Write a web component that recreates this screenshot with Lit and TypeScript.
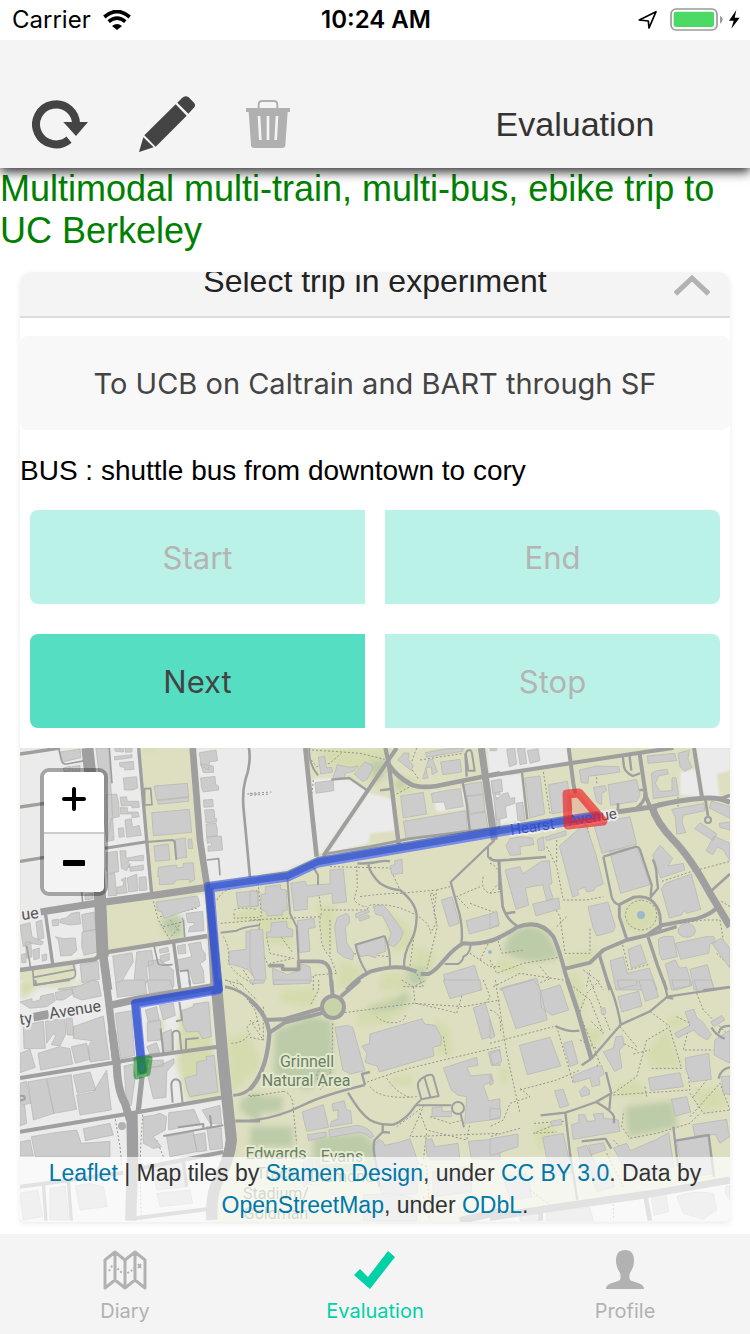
import { LitElement, html, svg, css } from "lit";
import { customElement } from "lit/decorators.js";

interface Sheet {
  x: number;
  y: number;
  plain?: string;
  green?: string;
  dark?: string;
  buildings: string;
  roads: [number, string][];
  paths: string;
}

// Each sheet is drawn at three units to one map pixel, from its own corner.
const SHEETS: Sheet[] = [
  {
    x: 10,
    y: 740,
    plain:
      "M30 24H388L425 462L270 490L30 520ZM556 24H750V410L590 440ZM30 525L270 495L290 640L128 672L110 560L30 560ZM30 520H110L128 672L30 690ZM285 645L590 595L615 750H290ZM200 665L280 655L290 750H190ZM490 500L580 460L600 590L530 595Z",
    green: "M395 24H450V30L420 38L395 30ZM670 520L740 500L745 540L680 545Z",
    dark: "M450 550L470 530L520 525L515 590L480 590Z",
    buildings:
      "M150 36L210 27L213 53L158 66ZM160 84L182 79V95H162ZM185 80L210 76V94H186ZM258 24H296L312 300L290 305ZM313 26H340V36L316 34ZM345 24H366V36L346 37ZM313 50L366 44V53L314 60ZM328 68L370 64L372 88L344 90V82L330 80ZM340 114L380 110L383 144L368 150L343 150ZM290 165L320 162L326 190L328 230L304 235L293 300ZM330 172L350 170L352 184H386L388 202L366 204V196L334 198ZM330 203H352V216H384L388 230L366 234V222H332ZM325 265L340 263L343 290L327 292ZM345 240L364 236L368 262L388 256L394 286L350 292ZM432 138L532 130L536 170L440 180ZM442 182L536 172V184L445 193ZM425 218L538 208L545 277L430 287ZM432 318L475 312L480 360L436 364ZM496 298L526 294L530 352L500 356ZM534 298L545 297L548 325L536 326ZM445 382L500 375V384L520 382V370L550 368L554 420L538 428V418L500 420L490 432L448 434V410H443ZM288 338L322 334L326 395L296 400L288 390ZM330 332H348V355L400 345V362H355V382L400 375V390L360 394V370L350 392L334 385ZM293 402L314 400L320 466L296 468ZM320 442L340 438V424L333 420L348 412V440L352 458L322 462ZM352 414L380 402L384 452L356 456ZM387 412L408 410L411 450L388 452ZM225 464L248 460L250 476L226 480ZM568 38L618 30L623 62L598 66L596 90L573 76ZM572 72L610 78L611 97L580 98ZM572 114L615 109L617 134L626 138V150L580 156L574 140ZM580 180L608 178L610 200L582 202ZM584 210L612 208L615 236H620V246L588 248ZM588 252L618 250L622 270V288L590 290ZM590 292L634 288L638 330L594 334V318H604V308L592 310ZM438 486L560 468L566 476L570 498L462 535L455 516L442 512ZM528 520L578 514L582 572L535 576L540 560L552 556V548H533ZM30 556L60 548L66 590L100 606L95 615L60 610L40 620ZM78 546L95 540L102 594L84 600ZM126 540L146 538V556L128 558ZM150 538L168 534L184 520L208 516L212 552L180 555L150 548ZM215 524L252 516L258 568L220 574ZM216 576L258 568L264 636L222 646L215 620ZM145 600L136 590L160 596L196 594L200 632L184 646L152 648ZM46 608L62 605L66 650L50 655ZM68 630L88 624V655L72 660ZM96 645L110 642V660L97 664ZM34 644L48 640V668H36ZM210 674L264 664L268 718L216 728ZM308 648L366 638L370 666L362 678L320 750ZM380 636L425 630L430 672L410 680L412 720L400 750H370ZM415 664L448 658L490 690L492 740L420 748ZM448 628L474 622L476 635L450 640ZM450 648L478 640V660L454 668ZM502 618L526 613L528 640L505 642ZM535 612L572 606L576 628L586 640V660L570 672L580 690L583 728L550 732L540 696L505 690L500 660L545 650ZM145 746L205 738V750H145ZM678 458L745 452V498L684 502ZM750 570L708 574V628L658 634V672L690 680L716 690L732 712L750 710Z",
    roads: [
      [36, "M232 24L252 200L270 470L278 650"],
      [26, "M274 480L280 650L294 750"],
      [20, "M548 24L570 300L592 445"],
      [26, "M598 445L615 750"],
      [10, "M386 24L410 300L425 462"],
      [22, "M92 516L270 488L430 466L592 442"],
      [10, "M30 42L150 24"],
      [5, "M298 24L306 130"],
      [5, "M146 24L154 60Q157 73 170 72L225 62"],
      [10, "M30 201L104 190"],
      [10, "M30 364L104 352"],
      [9, "M285 325L410 305"],
      [6, "M410 306L485 300Q494 300 494 308L499 360"],
      [5, "M404 146L422 145L426 194L404 195Z"],
      [13, "M30 690L255 658Q275 640 300 635L592 588"],
      [10, "M106 518L128 672"],
      [10, "M490 602L510 750"],
      [5, "M50 618L62 684M432 618L444 670Q446 678 488 674M510 694L534 690L542 750M520 538L524 592"],
      [8, "M717 24Q724 70 706 120Q695 160 702 220L720 412"],
      [5, "M590 360L626 356L630 406M215 456L218 488"],
      [5, "M68 686L72 736L184 716Q200 712 196 696L190 672M70 712L196 688"],
      [6, "M632 578L680 572Q700 560 750 556"],
    ],
    paths:
      "M712 162H750M430 484L445 540L478 596L500 570L520 530M450 530L560 505M460 560L520 545M480 540L510 575M620 480Q640 450 660 448M632 550L750 540M672 510Q690 500 740 508M672 520V535L745 532M640 590Q660 620 655 670Q690 720 740 730M700 690L730 735M645 720L700 735M740 450V500",
  },
  {
    x: 250,
    y: 740,
    plain:
      "M0 24H162L198 350L110 390L0 408ZM182 130L195 115L300 118L350 150L218 338L202 340ZM355 158L400 170L430 180L434 272L360 280L355 310L232 342ZM545 155L640 150L645 205L560 215ZM712 24H750V95L718 100ZM708 110L750 100V260L730 262Z",
    green:
      "M190 28L400 34L410 80L380 140L320 90L250 80ZM430 120L480 110L520 130L450 170ZM10 500L120 510L130 620L50 610ZM200 490L260 500L240 640L220 620ZM400 500L480 560L490 620L430 640ZM270 660L350 690L300 740L260 750ZM500 620L560 640L540 700L480 690ZM400 700L480 700L470 750H380Z",
    dark: "M355 70L410 55L405 100L380 130ZM440 120L465 110L460 140L440 150ZM470 690L530 680L520 730L480 740Z",
    buildings:
      "M205 52L224 49L230 84L245 82L248 96L212 102ZM262 74L298 82L325 78L310 94L285 100L284 112L248 117ZM345 66L366 76L368 86L350 120L338 124L312 102ZM195 128L250 121L251 152L198 160ZM462 38L478 40L474 58L490 76L484 92L444 60ZM526 38L578 28L640 24L638 34L530 52ZM535 60L548 58L562 96L546 104L544 80L528 84L534 114L518 116ZM572 66L630 58L635 96L578 104ZM452 168L520 157L530 222L460 234ZM544 160L562 156L600 150L632 146L640 200L588 208L582 186L548 188ZM642 134L694 126L700 162L648 168ZM650 170L700 164L705 214L658 220ZM656 224L706 216L714 266L662 272ZM460 244L648 212L652 270L485 298L468 294ZM724 125L750 120V165L728 160ZM734 175L750 172V260L738 255ZM0 452L22 455L25 497L0 500ZM46 440L92 434V448L110 450L112 510L98 514V525L52 528L50 515L33 508V462H46ZM122 430L166 424L170 436L240 432V390L280 387L290 486L248 490L246 460L172 472V508L132 512ZM64 548L110 544L112 564L128 568V590L66 592L50 588V576H62ZM0 570L38 568L48 715L38 728L16 724L0 680ZM142 542L192 535L196 562L175 566L180 634L148 638ZM67 684L112 704L152 690L155 672L180 680L185 724L70 734ZM262 532L290 520L298 530V550L286 562L290 608L312 640L308 660L282 652L262 636L254 560ZM316 522L354 508L358 516L318 534ZM326 535L354 524L360 532L330 544ZM370 498L400 496L412 508L460 576L450 602L432 620L412 612L424 580L398 528L376 522ZM318 616L404 588L408 634L382 642L376 654L354 646L330 650ZM420 378L434 374V362L456 358L458 400L426 404ZM574 480L606 470L628 550L598 560ZM648 542L740 516L746 558L658 582ZM580 704L674 676L695 750H592Z",
    roads: [
      [14, "M166 24L185 210L200 350"],
      [6, "M178 24Q174 70 204 106"],
      [12, "M440 24L410 68L220 348"],
      [7, "M244 119L298 114L350 150M390 151L422 147"],
      [13, "M406 24L416 68L426 150L446 312"],
      [14, "M416 74Q440 110 484 134Q510 145 560 138L750 100"],
      [21, "M694 24L728 265L733 300"],
      [7, "M638 128L650 190L660 278M646 40L650 110"],
      [6, "M658 30Q645 32 649 50L655 92L674 92L666 40Q664 28 655 30"],
      [8, "M222 342L360 320L480 296L750 262"],
      [6, "M112 412L120 520L140 560L146 664M190 382L204 405V434"],
      [11, "M56 677H98V688H146V664H205Q232 664 240 690L246 750"],
      [7, "M322 370Q350 372 380 366Q410 360 420 364M355 374Q360 400 390 430Q420 450 450 450Q500 490 500 530Q498 580 484 600Q460 640 462 686"],
      [6, "M316 614L404 588M316 612Q325 660 350 698M404 588Q422 630 420 684"],
      [12, "M290 750Q320 715 360 695Q430 675 470 685L500 695M512 702H535C570 690 590 635 640 610Q700 615 750 592"],
      [7, "M734 300L602 426L628 520Q640 570 634 612"],
      [6, "M714 318L714 350Q720 362 750 362M584 672H625Q640 660 640 650Q660 642 662 615"],
      [7, "M748 362V450"],
    ],
    paths:
      "M0 160L64 156M0 166L60 162M186 30L250 34L330 40L404 58M184 60L200 80L240 70L280 34M190 120L186 160M440 162L480 140M500 24L480 80L504 115M510 60L640 40M0 540L210 530M24 430L34 520L22 600L56 680M50 590L60 640L130 655L60 670M94 592L130 640M208 470L214 510H350L360 495Q420 490 470 512Q540 540 542 580L560 545L540 460H552L550 480M320 378L322 440L312 480Q330 500 350 500M330 470Q400 460 450 460L560 450L552 520L562 560L530 690M240 380L420 384L450 450M214 520Q205 550 214 580Q210 620 240 650L260 700L190 706V750M240 540V650M300 640L420 650M490 600L480 680M460 740L520 740L500 700M560 450L600 440M700 410Q690 450 720 460L750 455M655 505L620 470L690 440M660 490L740 520M660 640L720 680H750M690 660L720 600L750 590",
  },
  {
    x: 490,
    y: 740,
    plain:
      "M0 24H232L238 68L0 102ZM0 112L94 100L108 236L0 262ZM572 95L618 88L634 172L570 165ZM618 24H720V92L680 102L688 170L640 172Z",
    green:
      "M400 490L450 470L500 500L505 550L450 580L400 560ZM230 650L330 620L300 665L235 680ZM30 650L130 690L60 700L10 690ZM235 700L270 700L260 750H240Z",
    dark: "M40 635Q50 565 110 560Q160 555 185 600L208 650Q130 680 70 650Z",
    buildings:
      "M50 28L74 24L80 72L58 80ZM82 26L104 24L110 70L90 74ZM112 32L144 26L150 62L120 70ZM0 24H20V32H0ZM4 122L34 117L38 154L14 158L20 178L38 162L54 158L60 176L74 172V190L46 200L50 232L20 240ZM78 190L98 186L106 240L84 245ZM104 114L150 108L164 222L120 234ZM175 134L232 124L246 210L186 222ZM268 90L320 78L386 80L390 96L336 104L296 108L294 130L274 128ZM310 142L345 137L350 152L336 160L335 194L320 186ZM354 134L440 118L450 164L440 184L362 196ZM472 48L554 40L560 62L474 70ZM564 40L598 30L594 56L606 82L584 94L570 80ZM484 100L500 92L532 88L535 102L506 108L496 130L510 154L546 152V114L558 112L566 165L490 176ZM545 208L642 190L645 212L580 226L576 246L588 278L560 282L556 232ZM664 184L720 200V235L658 204ZM630 248L680 282L670 302L614 266ZM688 250L720 246V270L690 262ZM672 288L720 310V362L700 330L682 320L668 344L648 332ZM45 390L90 380L98 402L154 364L178 362L186 430L176 436L190 476L170 482L158 434L106 444L116 496L78 508ZM128 492L206 474L210 506L138 528ZM208 318L286 250L316 338L318 344L340 432L318 440L310 452L290 456L284 442L262 450L266 464L248 472ZM142 298L160 290L164 330L146 332ZM164 292L228 272V286L170 302ZM60 296L90 290L128 294L132 314L90 320L92 344L60 346L48 318ZM310 250L420 230L440 312L336 340ZM358 332L440 320L480 434L392 460ZM488 345L510 316L548 355L534 378L580 370L584 390L512 414ZM514 446L526 430L604 402L632 508L590 520L584 510L574 525L538 534ZM294 500L330 492L354 486L364 520L376 560L370 574L320 588L308 560ZM564 574Q566 552 592 550Q616 555 616 575Q612 592 588 592Q568 590 564 574ZM505 598Q515 586 550 590L562 650L516 660L508 640ZM556 610L648 590L672 590L676 606L660 612L656 640L572 658ZM666 610L694 594L720 625V685ZM414 628L452 614L470 668L424 684ZM360 662L400 650L412 700L478 684L502 750H378ZM526 672L556 660L568 684L590 682L606 736L560 750H545ZM600 688L652 674L670 740V750H612ZM0 522L20 514L28 552L0 566ZM30 745L140 714L150 750H30Z",
    roads: [
      [12, "M0 107L240 70L480 34L550 24"],
      [12, "M236 24L250 130L256 160"],
      [7, "M96 98L112 238M398 46L402 80Q405 96 428 108L450 100M418 42L424 92"],
      [12, "M448 36L468 170L482 205M612 24L636 172"],
      [15, "M310 230L380 216L480 202Q560 180 650 174Q690 172 720 188"],
      [22, "M484 196Q500 250 550 300Q600 350 660 460L720 560"],
      [10, "M464 160Q470 180 440 205M510 190L490 210M692 176L720 166"],
      [8, "M664 452L720 402M646 178L654 228"],
      [8, "M384 190V212M448 150H466"],
      [7, "M340 350L430 322Q445 316 450 330L485 435L482 468M340 350L365 470Q370 490 388 494M488 358Q500 380 500 410L504 445L480 474"],
      [9, "M388 494L430 472Q480 462 500 500Q515 520 510 572M388 494V530L410 596"],
      [12, "M226 686L300 668L340 630L410 600L470 586L515 556L620 536Q660 524 680 504"],
      [10, "M476 586L560 560M474 590L502 675L530 750M328 644L360 750"],
      [12, "M0 604Q40 590 80 562Q150 535 190 590Q205 620 226 700L242 750"],
      [8, "M0 350Q0 362 24 362L168 351M26 362L38 500Q50 540 84 560M50 520L76 516"],
      [6, "M640 750L720 740"],
    ],
    paths:
      "M160 96L180 220M170 320L200 380L220 480H290L340 470M200 300V370M180 480L210 530L225 640H300V560M290 250L310 340M320 100V136M564 170V204M516 424L600 396L720 364M490 150L510 160M0 460L26 430M0 370Q30 380 26 420M84 560L20 590L36 640L100 630M0 660L20 700L100 670L220 650M10 740L90 700L220 720M150 680L180 716L146 730M200 560L230 530M280 690L320 720L340 750M290 740L300 690M398 615L416 690L480 672M456 480Q500 490 500 526Q495 568 454 570Q410 565 406 526Q410 485 456 480M570 550L640 540H690L700 600M680 640L700 660M694 484L720 500",
  },
  {
    x: 10,
    y: 980,
    plain:
      "M0 0H600L645 340L662 520L600 740H0Z",
    green:
      "M30 0H190V18L80 20L40 60L30 50ZM510 100L600 60L612 200L640 350L530 365L500 250ZM650 170L720 160L750 260L660 340ZM210 0H265L200 20ZM420 130L460 110V160H420Z",
    dark: "M690 365Q720 340 750 345V430L690 390Z",
    buildings:
      "M30 66L66 56V66L90 60L92 48L130 40L136 62L110 80L60 85ZM135 38L184 26L190 40L160 60H140ZM186 24L212 16L250 0L265 5L274 48L215 60L190 50ZM40 136L100 124L106 205L42 206ZM106 124L164 115L168 160L150 198L124 194L138 165L130 162L110 190ZM168 116L186 112L192 165L172 165ZM190 140L280 108L298 238L240 246L235 200L245 182L190 175ZM30 220L60 208L76 262L30 278ZM84 220L148 200L180 206L188 252L92 270ZM184 200L230 190L240 238L196 250ZM30 310L50 304L62 370L30 376ZM54 306L108 296L132 400L70 420ZM110 296L184 284L190 340L200 388L132 400ZM190 286L240 276L258 330L202 340ZM200 345L250 336L290 270L304 390L210 405ZM30 380L44 376L50 430L30 438ZM30 486L60 480L70 528H30ZM64 470L134 458L200 450L214 490L300 484V530H76ZM220 446L300 430L310 465L226 482ZM340 0H405L410 40L322 52L318 10ZM412 0H480L490 30L418 40ZM316 100L364 92L374 226L332 236ZM342 258L368 252L376 290L364 376L350 378ZM406 90L440 80L448 120L414 124ZM412 126L452 122V180L412 184ZM448 76L490 70L496 106L460 120ZM456 160L484 148L490 210L462 214ZM410 200L440 188L450 218L420 222ZM515 92L550 80V72L596 66L604 170L578 176L566 154L530 156L518 132ZM408 266L440 260L492 236V250L470 275L468 352L430 356ZM416 242L460 240V258L420 262ZM524 294L560 284V246L590 240L588 230L612 226L624 336L540 350L532 330ZM400 410L430 406L450 400L470 410L466 450L430 470L454 500L430 505L400 490ZM476 398L552 388L570 430L476 450ZM576 390L630 376L635 432L600 430ZM470 470L550 455L560 515L480 530ZM590 440L634 444L638 505L600 510ZM550 465L585 458L590 512L562 516ZM30 640L84 630L98 710L40 720ZM120 625L166 618L176 720H120ZM196 618L240 610L280 620L292 680L210 690ZM430 560L520 545L532 620L440 630ZM440 640L540 630L548 670L450 680Z",
    roads: [
      [22, "M288 0L304 130L316 240"],
      [24, "M306 150L320 250Q322 330 345 370L360 420"],
      [34, "M366 400L368 530L362 722"],
      [16, "M396 290L384 400"],
      [22, "M300 76L380 58L612 20"],
      [34, "M618 0L640 250L664 480Q660 530 630 590Q600 640 606 720"],
      [12, "M30 294L310 248L420 228L640 198"],
      [12, "M30 455L350 402L640 352"],
      [6, "M452 146L460 220M488 212V170Q484 152 500 152Q510 152 510 170L514 210M488 368L484 318Q484 298 498 298Q512 300 512 318L518 370M528 208V178L566 174M508 66L516 120L498 124M504 0L508 20M538 0L540 15"],
      [6, "M460 468L640 436M504 442L580 432V444M600 405L604 440"],
      [12, "M365 570L640 516M30 620L340 578M364 716L600 686"],
      [10, "M100 610L108 722M175 600L184 722M520 540L530 620"],
      [9, "M645 20Q710 30 750 95M670 346Q720 345 750 285M676 423H750"],
      [6, "M76 0L78 14L180 0M30 348Q46 344 44 358L30 362"],
      [26, "M70 112L116 103"],
    ],
    paths:
      "M316 418L330 500L336 560M398 404L392 500L390 570L394 720M650 0L700 40L735 90L750 150M680 0L740 60M664 190Q700 190 720 160Q700 140 725 130L750 120M715 346H750M440 480L460 530",
  },
  {
    x: 250,
    y: 980,
    plain: "M640 722L720 650L750 655V722Z",
    green:
      "M90 30L200 20L190 80L90 70ZM0 200Q30 210 20 260L0 280ZM320 90L500 60L420 130L320 140ZM550 110L600 150L610 220L560 230ZM420 290L490 285L480 315H430ZM420 40L470 80L350 90Z",
    dark:
      "M75 150L180 110L245 120L250 280L170 330L70 280ZM0 345L100 350L95 395L0 400ZM0 440H130V500H0ZM190 470L340 460L380 500V590H190ZM350 80Q430 80 465 30L480 60Q440 100 360 92Z",
    buildings:
      "M0 0H45L40 10H0ZM70 0H180V10L72 14ZM255 142L292 136L308 142L345 272L300 282L278 270ZM336 198L358 190L360 162L516 116L524 132L556 136L574 170L572 196L548 202L552 228L388 276L382 258L346 248L350 220ZM580 0H690L694 30L600 56ZM670 84L706 70L734 166L696 178ZM715 216L750 208V256H724ZM580 264L680 232L684 256L650 262L662 288L724 282L730 304L700 316L716 362L750 356V416L644 430L650 350L625 346L604 330ZM156 396L220 374L236 442L170 454ZM246 372L282 362L290 390L302 392L306 430L240 440L244 424L264 418V390L250 394ZM172 464L228 456V470L176 482ZM236 450L320 436Q360 440 372 470L360 474Q345 455 320 458L240 472ZM372 500L386 478L400 486L404 496L450 486L480 476L502 540V640L400 650L380 600ZM526 480L546 476L554 500L624 490L630 540H540L530 520ZM546 384L576 380V394L604 394V410H546ZM655 484L750 476V540L664 536ZM548 575L660 560L666 635L550 650ZM340 645L440 640L500 660V722H340ZM160 540L185 536L195 610L160 620Z",
    roads: [
      [13, "M0 60Q50 100 58 160Q52 270 0 328"],
      [12, "M42 120L100 118L218 84M58 158L104 128L220 98"],
      [12, "M244 0L248 50M330 0L272 50"],
      [7, "M0 422Q80 415 160 375Q220 345 345 315M345 315L336 282L360 276M294 338Q330 400 360 420Q390 436 430 434Q470 420 498 374M398 432V456L374 480Q366 500 380 560L388 620M398 456L420 458"],
      [6, "M498 374L514 358L566 348L550 290Q545 278 520 292Q498 305 505 325L514 358M522 288L542 354M498 376H604M632 402L642 442"],
      [22, "M630 722L750 695"],
    ],
    paths:
      "M0 120L40 180L0 172M40 80L40 180M206 0V30L180 78M284 98L490 70L640 80L750 60M455 0L490 20L530 0M490 20L495 70Q590 90 620 100L650 0M380 110Q400 130 440 128Q470 120 465 105M248 130L246 250Q240 300 210 330L200 280Q230 240 240 270M340 310L450 272L580 240L750 200M410 295Q440 340 480 352M360 320Q390 360 500 350M440 440L520 380L480 470L750 460M510 400L530 450L650 480L660 430M530 460L520 540M540 410L600 430L640 420M100 334Q130 340 130 390L140 490M0 350L100 334M520 650L540 722M480 540L530 560L540 700M700 0L720 50L700 80M580 170L590 230",
  },
  {
    x: 490,
    y: 980,
    plain:
      "M0 722V712L270 672L480 642L720 604V722Z",
    green:
      "M275 140L340 150L330 190L290 200ZM465 230L510 155H540L575 260L490 266ZM530 110L580 105L585 140L540 150ZM370 325L430 300L465 320V350H380ZM130 440L200 430L190 470L150 520ZM30 260L60 270L50 310H30ZM600 330L690 320L710 380L640 400ZM245 20L280 0L275 130ZM440 505L478 500L486 520L446 530Z",
    dark: "M404 380L550 362L562 440L415 470Z",
    buildings:
      "M36 26L130 0L150 24L172 120L78 146ZM150 34L210 14L236 90L186 106L154 84ZM0 120L14 170L0 176ZM88 196L180 172L212 258L112 284ZM220 190L246 182L264 250L240 260ZM0 220L28 210L36 244L8 256ZM0 284L10 310L0 316ZM0 384L32 388V410L0 420ZM382 0H440V15L388 26ZM446 0H488L506 50L466 64ZM384 50L446 34L456 78L396 96ZM546 0H600V18L552 26ZM612 0H664L672 26L624 38ZM585 95L612 88L620 112L640 128L664 164L652 180L624 164L612 150L562 174L554 160L600 136ZM662 126L696 106L704 120L672 140ZM674 180L720 150V250L700 240L672 225ZM586 234L656 220L664 298L604 306L588 270ZM475 294L570 278L580 320L482 332ZM694 290L720 288V345L700 340ZM340 216L370 204L378 170L398 168L402 196L388 210L396 264L374 274ZM248 288L310 262L336 256L342 282L326 292L330 314L306 320L300 294L252 308ZM268 334L284 318L298 330V344L274 350ZM332 88L344 82L348 100L336 104ZM194 332L220 328L236 376L210 384ZM182 424L214 418L216 434L184 438ZM244 434L266 428V404L284 404L292 424L316 422L310 402L340 400V414L385 420L390 454L250 478ZM158 472L220 460L246 580L180 590ZM544 358L590 350L602 396L556 408ZM608 434L710 418L718 470L690 490L676 464L614 468ZM560 482L654 468L668 580L580 596ZM370 504L410 490L422 512L500 478L536 458L552 560L460 590L400 556ZM262 504L290 496L320 560L350 552L375 620L320 634L300 570L280 600ZM296 496L340 488L348 510L304 524ZM0 476L60 466L84 462V500L10 525H0ZM40 590L110 580L125 650L60 660ZM484 650L528 640L536 696L492 706ZM560 650Q600 630 670 640L680 690L640 718L580 700ZM170 690L300 682L310 722H170ZM90 706L150 700V722H90ZM706 620L720 615V660L706 640Z",
    roads: [
      [14, "M232 0L262 90L304 236"],
      [7, "M304 236L275 256M304 236L392 134L480 94L530 52M352 0Q380 60 392 134M522 0L532 50L720 22M530 52L550 56"],
      [7, "M196 138Q235 158 268 152"],
      [7, "M152 406L226 398Q280 380 318 366L364 340L348 276M318 366Q370 395 372 412V430M362 342L358 388M226 398L240 520L262 660M275 484L346 476L364 506M550 440L564 560M556 482L656 465L672 590M664 142Q680 168 704 176M720 138Q690 136 686 160M720 262Q690 268 686 296"],
      [22, "M0 712L270 672L480 642L720 600"],
      [14, "M466 648L480 722M152 695V722"],
    ],
    paths:
      "M0 190L190 140M16 0L50 220L90 400M0 90Q40 100 30 160M90 330L200 300L270 270M90 325L120 350L60 370L40 420L0 440M200 140L250 310L330 250L268 100L290 40L330 0M250 20L300 60L340 160L300 120M270 180L330 210M300 0L360 150M390 140L440 200M480 94L540 140L470 180L440 290L370 340M540 150L575 265L480 265M560 110L600 130L580 210L670 210M430 222L480 210M465 320L470 350M370 345L600 330L590 240M600 340L640 400L720 390M600 410L690 310L720 390M610 350L650 300M132 430L220 424L130 460L200 456M90 445L0 470M400 400L395 440L420 475L500 460L600 430L630 400M620 40L640 90L720 170M440 210L400 190M120 630L200 690M370 480L390 500M350 520L400 620M370 660V722",
  },
];

@customElement("trip-map")
class TripMap extends LitElement {
  static styles = css`
    :host {
      display: block;
      position: relative;
      height: 474px;
      overflow: hidden;
      border-radius: 0 0 4px 4px;
      background: #dedfc1;
      font-family: "Liberation Sans", Arial, sans-serif;
    }
    .tiles {
      display: block;
      width: 100%;
      height: 100%;
    }
    .plain { fill: #ebebeb; }
    .green { fill: #d5dbae; }
    .dark { fill: #bccba8; }
    .building { fill: #cccccc; stroke: #b4b4b0; stroke-width: 2; }
    .road { fill: none; stroke: #9f9f9f; stroke-linejoin: round; }
    .path { fill: none; stroke: #949488; stroke-width: 3; stroke-dasharray: 6 6; }
    .place, .street {
      font-family: Roboto, "Open Sans", sans-serif;
      font-size: 16px;
      paint-order: stroke;
      stroke-linejoin: round;
    }
    .place { fill: #6b8062; stroke: #e2e8ce; stroke-width: 4px; }
    .street { fill: #555555; stroke: #ececec; stroke-width: 4px; }
    .small { font-size: 15px; }
    .zoom {
      position: absolute;
      top: 20px;
      left: 20px;
      display: grid;
      width: 60px;
      border: 4px solid rgba(0, 0, 0, 0.3);
      border-radius: 9px;
      background-clip: padding-box;
    }
    .zoom button {
      display: grid;
      place-items: center;
      height: 60px;
      padding: 0 0 6px;
      border: 0;
      background: #ffffff;
      border-radius: 5px 5px 0 0;
    }
    .zoom button + button {
      padding: 0;
      border-top: 2px solid #cccccc;
      border-radius: 0 0 5px 5px;
      background: #f4f4f4;
    }
    .zoom svg { width: 24px; height: 24px; }
    .credit {
      position: absolute;
      inset: auto 0 0 0;
      padding: 0 20px 1px;
      background: rgba(255, 255, 255, 0.7);
      color: #333333;
      font-size: 23px;
      line-height: 32px;
      text-align: center;
    }
    a { color: #0078a8; text-decoration: none; }
  `;

  render() {
    const at = (s: Sheet) => `translate(${s.x} ${s.y}) scale(0.333333)`;
    return html`
      <svg class="tiles" viewBox="20 748 710 474" preserveAspectRatio="xMidYMid slice" role="img" aria-label="Map of the trip">
        <defs>
          <filter id="soft" x="-20%" y="-20%" width="140%" height="140%"><feGaussianBlur stdDeviation="9" /></filter>
          <filter id="edge" x="-5%" y="-5%" width="110%" height="110%"><feGaussianBlur stdDeviation="3" /></filter>
        </defs>
        ${SHEETS.map(
          (s) => svg`<g transform=${at(s)}>
            <path class="plain" filter="url(#edge)" d=${s.plain ?? ""} />
            <path class="green" filter="url(#soft)" d=${s.green ?? ""} />
            <path class="dark" filter="url(#soft)" d=${s.dark ?? ""} />
          </g>`
        )}
        ${SHEETS.map(
          (s) => svg`<g transform=${at(s)}>
            <path class="path" d=${s.paths} />
            <path class="building" d=${s.buildings} />
          </g>`
        )}
        ${SHEETS.map(
          (s) => svg`<g transform=${at(s)}>
            ${s.roads.map(([w, d]) => svg`<path class="road" stroke-width=${w} d=${d} />`)}
          </g>`
        )}
        <circle cx="333" cy="1007" r="11" fill="#c8d3a8" stroke="#9f9f9f" stroke-width="4" />
        <circle cx="458" cy="1108" r="6" fill="#dedfc1" stroke="#9f9f9f" stroke-width="2" />
        <circle cx="708" cy="820" r="3" fill="#dedfc1" stroke="#9f9f9f" stroke-width="2" />
        <circle cx="641" cy="915" r="4" fill="#9fb8cf" />
        <circle cx="490" cy="952" r="2" fill="#9fb8cf" />
        <circle cx="122" cy="1126" r="4" fill="#b2b2b2" />
        <text class="street" transform="translate(22 920) rotate(-7)">ue</text>
        <text class="street" transform="translate(20 1025) rotate(-8)">ty</text>
        <text class="street" transform="translate(50 1019) rotate(-9)">Avenue</text>
        <text class="place" x="307" y="1067" text-anchor="middle">Grinnell</text>
        <text class="place" x="306" y="1086" text-anchor="middle">Natural Area</text>
        <text class="place" x="276" y="1159" text-anchor="middle">Edwards</text>
        <text class="place" x="276" y="1179" text-anchor="middle">Track</text>
        <text class="place" x="276" y="1199" text-anchor="middle">Stadium/</text>
        <text class="place" x="276" y="1219" text-anchor="middle">Goldman</text>
        <text class="place" x="342" y="1162" text-anchor="middle">Evans</text>
        <text class="place" x="342" y="1182" text-anchor="middle">Diamond</text>
        <text class="street small" transform="translate(511 835) rotate(-8)">Hearst</text>
        <text class="street small" transform="translate(569 826) rotate(-9)">Avenue</text>
        <g fill="none" stroke-linecap="round" stroke-linejoin="round">
          <path d="M597 817L500 832L318 863L288 877L210 888L218 990L136 1004L142 1070" stroke="#3355ff" stroke-opacity="0.6" stroke-width="9" />
          <path d="M597 815L500 830L318 861L288 875L208 886L219 989L135 1003L142 1070" stroke="#2a4cc0" stroke-opacity="0.6" stroke-width="8" />
          <path d="M568 825L567 794L579 793L603 821Z" fill="#f02020" fill-opacity="0.15" stroke="#f02020" stroke-opacity="0.66" stroke-width="9" />
          <path d="M137 1060L149 1059L147 1073L137 1076Z" fill="#1c8a2c" fill-opacity="0.55" stroke="#1c8a2c" stroke-opacity="0.6" stroke-width="7" />
        </g>
      </svg>
      <div class="zoom">
        <button type="button" aria-label="Zoom in">
          <svg viewBox="0 0 24 24"><path d="M2 12H22M12 2V22" stroke="#000" stroke-width="4" stroke-linecap="round" /></svg>
        </button>
        <button type="button" aria-label="Zoom out">
          <svg viewBox="0 0 24 24"><rect x="1" y="9" width="22" height="6" rx="1" /></svg>
        </button>
      </div>
      <div class="credit">
        <a href="#leaflet">Leaflet</a> | Map tiles by <a href="#stamen">Stamen Design</a>, under
        <a href="#cc">CC BY 3.0</a>. Data by <a href="#osm">OpenStreetMap</a>, under <a href="#odbl">ODbL</a>.
      </div>
    `;
  }
}

@customElement("app-root")
class AppRoot extends LitElement {
  static styles = css`
    :host {
      display: flex;
      flex-direction: column;
      min-height: 100vh;
      background: #ffffff;
      color: #000000;
      font-family: "Liberation Sans", Arial, sans-serif;
    }
    * { box-sizing: border-box; }
    button { font: inherit; color: inherit; padding: 0; border: 0; background: none; }
    svg { display: block; }
    .status {
      display: grid;
      grid-template-columns: 1fr auto 1fr;
      align-items: center;
      height: 40px;
      padding: 0 10px 0 12px;
      font-family: Inter, sans-serif;
      font-size: 24px;
      line-height: 40px;
    }
    .carrier, .power { display: flex; align-items: center; gap: 12px; }
    .power { justify-content: flex-end; }
    .clock { font-weight: 600; }
    .header {
      position: relative;
      display: grid;
      grid-template-columns: 8fr 7fr;
      align-items: center;
      height: 128px;
      padding-top: 40px;
      background: #f4f4f4;
      box-shadow: 0 4px 10px rgba(0, 0, 0, 0.8);
      clip-path: inset(0 0 -20px 0);
    }
    .tools { display: flex; align-items: center; gap: 51px; padding-left: 32px; }
    .tools button:disabled { opacity: 0.38; }
    h1 {
      margin: 0;
      color: #333333;
      font-size: 34px;
      font-weight: 400;
      line-height: 40px;
      text-align: center;
    }
    .trip { margin: 0; color: #008000; font-size: 36px; line-height: 42px; }
    .card {
      margin: 20px 20px 12px;
      border-radius: 12px 12px 4px 4px;
      box-shadow: 0 2px 6px rgba(0, 0, 0, 0.08);
    }
    .head {
      display: grid;
      grid-template-columns: 76px 1fr 76px;
      align-content: center;
      align-items: center;
      justify-items: center;
      width: 100%;
      height: 46px;
      padding-bottom: 26px;
      overflow: hidden;
      border-bottom: 2px solid #dddddd;
      border-radius: 12px 12px 0 0;
      background: #f4f4f4;
      color: #222222;
      font-size: 32px;
      line-height: 38px;
    }
    .head span { grid-column: 2; }
    .head svg { margin-top: 8px; }
    .button {
      height: 94px;
      border-radius: 8px;
      color: #444444;
      font-family: Inter, sans-serif;
      font-size: 31px;
    }
    .choice { display: block; width: 100%; margin-top: 18px; background: #f8f8f8; font-size: 29px; }
    .leg { margin: 0; padding: 25px 0 23px; font-size: 28px; line-height: 32px; }
    .actions {
      display: grid;
      grid-template-columns: 1fr 1fr;
      gap: 30px 20px;
      padding: 0 10px 20px;
    }
    .action { background: #55dec2; border-radius: 8px 0 0 8px; }
    .action:nth-child(even) { border-radius: 0 8px 8px 0; }
    .action:disabled { background: #bbf2e7; color: #b4b4b4; }
    .tabs {
      display: grid;
      grid-template-columns: repeat(3, 1fr);
      height: 100px;
      margin-top: auto;
      background: #f4f4f4;
      font-family: Inter, sans-serif;
      font-size: 20px;
    }
    .tab {
      display: flex;
      flex-direction: column;
      align-items: center;
      gap: 9px;
      padding-top: 16px;
      color: #b2b2b2;
      line-height: 24px;
      text-decoration: none;
    }
    .on { color: #01d1a7; }
  `;

  render() {
    return html`
      <div class="status">
        <div class="carrier">
          <span>Carrier</span>
          <svg width="28" height="20" viewBox="0 0 84 60" fill="none" stroke="#000" stroke-width="11">
            <path d="M4 21Q42 -12 80 21M17 35Q42 14 67 35" />
            <path d="M27 48Q42 36 57 48L42 60Z" fill="#000" stroke="none" />
          </svg>
        </div>
        <span class="clock">10:24 AM</span>
        <div class="power">
          <svg width="20" height="20" viewBox="0 0 60 60" fill="none" stroke="#000" stroke-width="5" stroke-linejoin="round">
            <path d="M4 30L54 5L33 54L31 33Z" />
          </svg>
          <svg width="70" height="24" viewBox="0 0 210 72">
            <rect x="3" y="3" width="138" height="63" rx="15" fill="none" stroke="#9a9a9a" stroke-width="5" />
            <rect x="11" y="11" width="121" height="46" rx="7" fill="#4cd964" />
            <path d="M150 23Q158 28 158 34Q158 42 150 47Z" fill="#9a9a9a" />
            <path d="M199 6L177 38H191L184 62L209 29H194Z" fill="#000" />
          </svg>
        </div>
      </div>

      <header class="header">
        <div class="tools">
          <button type="button" aria-label="Refresh">
            <svg width="56" height="56" viewBox="96 288 168 168">
              <path d="M228 378A60 60 0 1 0 207 419" fill="none" stroke="#444" stroke-width="24" />
              <path d="M190 366H264L228 408Z" fill="#444" />
            </svg>
          </button>
          <button type="button" aria-label="Edit">
            <svg width="56" height="56" viewBox="417 288 168 168" fill="#444">
              <path d="M527 313L560 347L467 440L433 406ZM532 308L546 294Q556 284 566 292L580 306Q590 316 581 324L565 341ZM430 412L461 442L417 456Z" />
            </svg>
          </button>
          <button type="button" aria-label="Delete" disabled>
            <svg width="44" height="56" viewBox="741 288 132 168" fill="#444">
              <path d="M779 326V314Q779 303 790 303H824Q835 303 835 314V326" fill="none" stroke="#444" stroke-width="6" />
              <path fill-rule="evenodd" d="M741 324H873V336H866L859 436Q858 444 850 444H765Q757 444 756 436L749 336H741ZM776 348L780 420H788L784 348ZM803 348V420H811V348ZM830 348L826 420H834L838 348Z" />
            </svg>
          </button>
        </div>
        <h1>Evaluation</h1>
      </header>

      <main>
        <p class="trip">Multimodal multi-train, multi-bus, ebike trip to UC Berkeley</p>
        <section class="card">
          <button type="button" class="head" aria-expanded="true">
            <span>Select trip in experiment</span>
            <svg width="36" height="22" viewBox="899 324 106 62">
              <path d="M903 381L952 335L1001 381" fill="none" stroke="#b2b2b2" stroke-width="15" />
            </svg>
          </button>
          <button type="button" class="button choice">To UCB on Caltrain and BART through SF</button>
          <p class="leg">BUS : shuttle bus from downtown to cory</p>
          <div class="actions">
            <button type="button" class="button action" disabled>Start</button>
            <button type="button" class="button action" disabled>End</button>
            <button type="button" class="button action">Next</button>
            <button type="button" class="button action" disabled>Stop</button>
          </div>
          <trip-map></trip-map>
        </section>
      </main>

      <nav class="tabs">
        <a class="tab" href="#diary">
          <svg width="44" height="40" viewBox="0 0 44 40" fill="none" stroke="#b2b2b2" stroke-width="3" stroke-linejoin="round">
            <path d="M2 10L12 2L22 10L32 2L42 10V38L32 30L22 38L12 30L2 38ZM12 2V30M22 10V38M32 2V30" />
            <path d="M6 21L9 16L13 17L18 22L23 24L28 21L33 16" stroke-width="2" stroke-dasharray="2 2" />
            <path d="M35 14L38 18M38 14L35 18" stroke-width="2" />
          </svg>
          Diary
        </a>
        <a class="tab on" href="#evaluation" aria-current="page">
          <svg width="44" height="40" viewBox="0 0 44 40" fill="#01d1a7">
            <path d="M1 25L7 19L15 27L35 1L42 7L17 39Z" />
          </svg>
          Evaluation
        </a>
        <a class="tab" href="#profile">
          <svg width="40" height="40" viewBox="0 0 40 40" fill="#b2b2b2">
            <path d="M20 0C26 0 29 4 29 10C29 15 28 18 25 23C24 27 24 30 27 31C33 33 39 34 39 39H1C1 34 7 33 13 31C16 30 16 27 15 23C12 18 11 15 11 10C11 4 14 0 20 0Z" />
          </svg>
          Profile
        </a>
      </nav>
    `;
  }
}
